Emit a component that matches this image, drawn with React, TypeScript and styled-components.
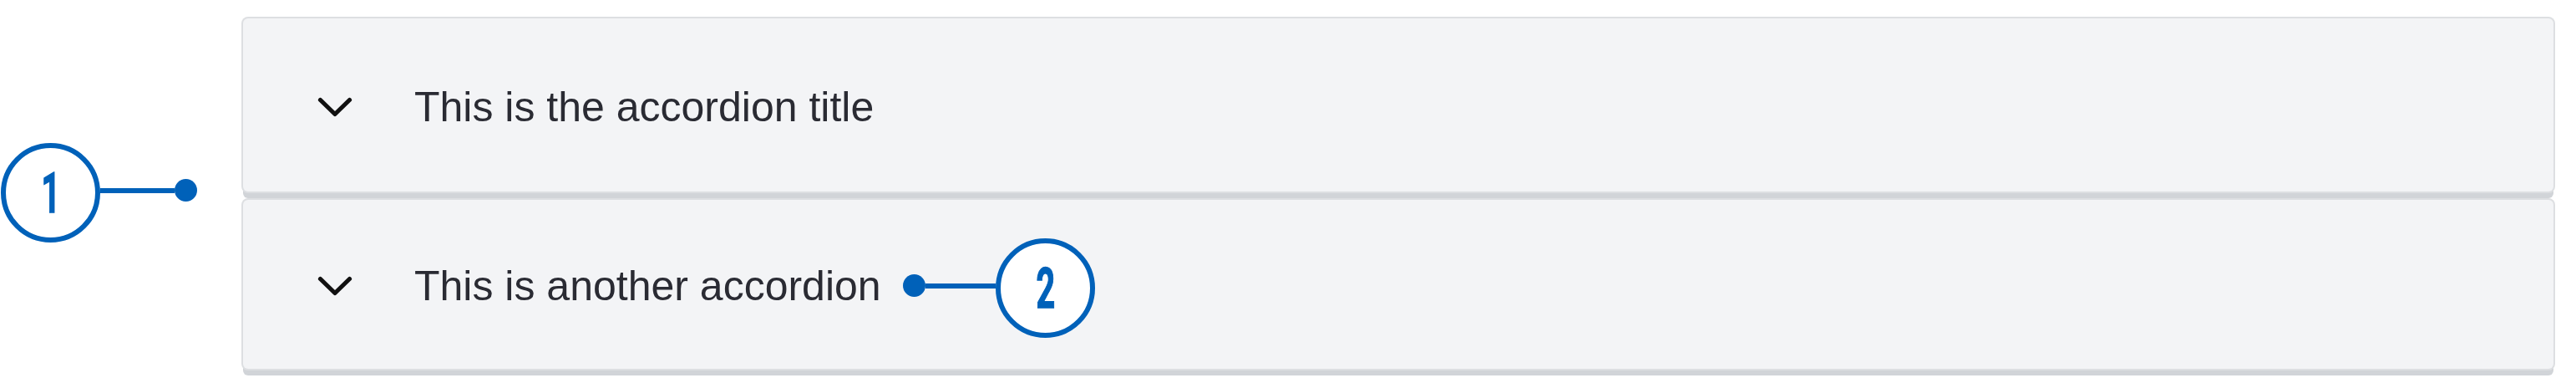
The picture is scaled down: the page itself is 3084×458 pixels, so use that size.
import React from "react";
import styled, { createGlobalStyle } from "styled-components";

const GlobalStyle = createGlobalStyle`
  html, body {
    margin: 0;
    padding: 0;
    background: #ffffff;
  }
  * { box-sizing: border-box; }
`;

const Page = styled.div`
  position: relative;
  width: 3084px;
  height: 458px;
  padding: 22px 27px 0 291px;
  background: #ffffff;
  font-family: "Liberation Sans", Arial, Helvetica, sans-serif;
`;

const AccordionList = styled.div`
  display: flex;
  flex-direction: column;
  gap: 10px;
`;

const Panel = styled.div<{ $h: number }>`
  height: ${(p) => p.$h}px;
  background: #f3f4f6;
  border-radius: 6px;
  box-shadow:
    0 0 0 2px #dddfe2,
    0 8px 0 0 #d1d4d8;
`;

const Header = styled.div<{ $shift: number }>`
  display: flex;
  align-items: center;
  height: 100%;
  padding-left: 89px;
  padding-top: ${(p) => p.$shift}px;
  gap: 74px;
  cursor: pointer;
`;

const Title = styled.span`
  font-size: 50px;
  line-height: 1;
  color: #2a2b33;
  white-space: nowrap;
`;

const Chevron = styled.svg`
  flex: none;
  width: 42px;
  height: 24px;
`;

const Callout = styled.div<{ $left: number; $top: number; $reverse?: boolean }>`
  position: absolute;
  left: ${(p) => p.$left}px;
  top: ${(p) => p.$top}px;
  display: flex;
  flex-direction: ${(p) => (p.$reverse ? "row-reverse" : "row")};
  align-items: center;
`;

const Badge = styled.div`
  flex: none;
  width: 119px;
  height: 119px;
  border-radius: 50%;
  border: 6px solid #0061b9;
  background: #ffffff;
  display: flex;
  align-items: center;
  justify-content: center;
`;

const Digit = styled.span`
  font-family: Roboto, "Liberation Sans", Arial, sans-serif;
  font-weight: 700;
  font-size: 66px;
  line-height: 1;
  color: #0061b9;
  -webkit-text-stroke: 1.4px #0061b9;
  display: inline-block;
  transform: scaleX(0.6);
  margin-top: 2px;
`;

const Connector = styled.div<{ $w: number }>`
  display: flex;
  align-items: center;
  margin-bottom: 6px;
  width: ${(p) => p.$w}px;
`;

const Line = styled.div`
  flex: 1;
  height: 6px;
  background: #0061b9;
`;

const Dot = styled.div`
  flex: none;
  width: 27px;
  height: 27px;
  border-radius: 50%;
  background: #0061b9;
`;

const ChevronIcon = () => (
  <Chevron viewBox="0 0 42 24" aria-hidden>
    <polyline
      points="3.5,3.5 21,20.5 38.5,3.5"
      fill="none"
      stroke="#111111"
      strokeWidth="5.2"
      strokeLinejoin="round"
      strokeLinecap="round"
    />
  </Chevron>
);

const items = [
  { title: "This is the accordion title", h: 207, shift: 4 },
  { title: "This is another accordion", h: 202, shift: 4 },
];

export default function App() {
  return (
    <>
      <GlobalStyle />
      <Page>
        <AccordionList>
          {items.map((it) => (
            <Panel key={it.title} $h={it.h}>
              <Header $shift={it.shift}>
                <ChevronIcon />
                <Title>{it.title}</Title>
              </Header>
            </Panel>
          ))}
        </AccordionList>

        <Callout $left={1} $top={171}>
          <Badge>
            <Digit>1</Digit>
          </Badge>
          <Connector $w={116}>
            <Line />
            <Dot />
          </Connector>
        </Callout>

        <Callout $left={1081} $top={285} $reverse>
          <Badge>
            <Digit>2</Digit>
          </Badge>
          <Connector $w={111}>
            <Dot />
            <Line />
          </Connector>
        </Callout>
      </Page>
    </>
  );
}
